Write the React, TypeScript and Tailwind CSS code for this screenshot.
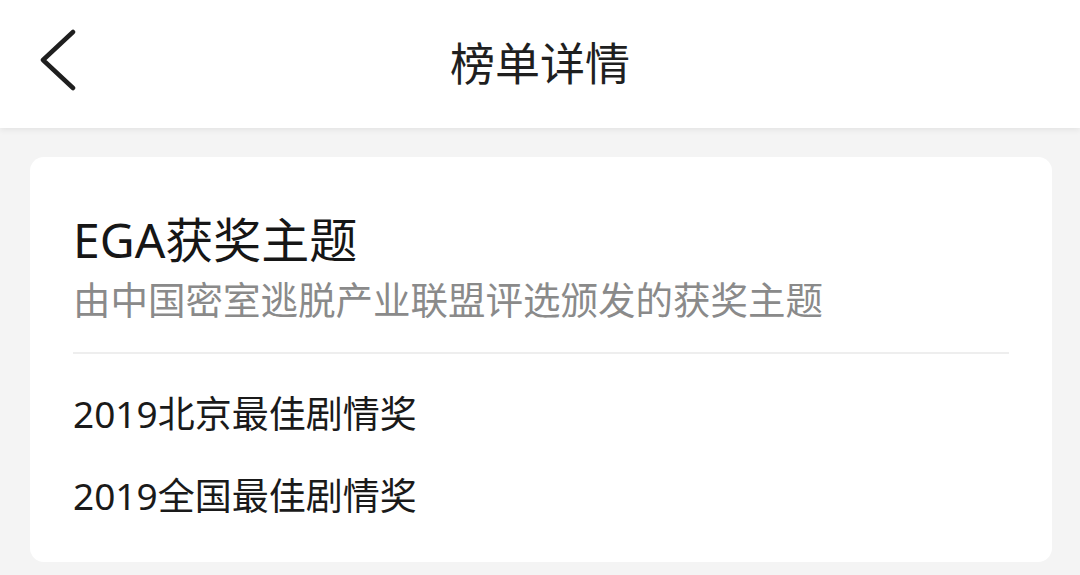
export default function App() {
  const items = ["2019北京最佳剧情奖", "2019全国最佳剧情奖"];

  return (
    <div className="h-[575px] w-full overflow-hidden bg-[#f4f4f4] font-['Noto_Sans','Noto_Sans_CJK_SC',sans-serif] text-[#1f1f1f]">
      {/* header */}
      <div className="relative z-10 flex h-[128px] items-center justify-center bg-white shadow-[0_2px_6px_rgba(0,0,0,0.07)]">
        <button className="absolute left-[36px] top-[28px] flex h-[64px] w-[44px] items-center justify-center">
          <svg width="40" height="62" viewBox="0 0 40 62" fill="none">
            <path d="M35 3 L5 31 L35 59" stroke="#1f1f1f" strokeWidth="4.5" strokeLinecap="round" strokeLinejoin="round" />
          </svg>
        </button>
        <h1 className="text-[45px] leading-[56px] font-normal">榜单详情</h1>
      </div>

      {/* content */}
      <div className="pl-[30px] pr-[28px] pt-[29px]">
        <div className="rounded-[14px] bg-white px-[43px] pb-[25px] pt-[55px]">
          <h2 className="text-[48px] leading-[56px] font-normal text-[#161616]">EGA获奖主题</h2>
          <p className="mt-[10px] text-[37.5px] leading-[44px] text-[#8a8a8a]">由中国密室逃脱产业联盟评选颁发的获奖主题</p>
          <div className="mt-[30px] h-[2px] bg-[#eeeeee]" />
          <div className="mt-[19px]">
            {items.map((t) => (
              <div key={t} className="text-[37px] leading-[82px] text-[#1a1a1a]">
                {t}
              </div>
            ))}
          </div>
        </div>
      </div>
    </div>
  );
}
